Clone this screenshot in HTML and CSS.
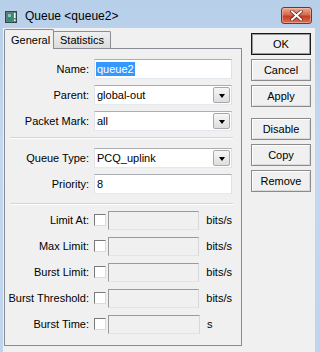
FILE: index.html
```html
<!DOCTYPE html>
<html lang="en">
<head>
  <meta charset="UTF-8" />
  <title>Queue &lt;queue2&gt;</title>
  <link rel="stylesheet" href="styles.css">
</head>
<body>

<div class="window">
  <div class="titlebar">
    <svg class="app-icon" width="12" height="12" viewBox="0 0 12 12">
      <rect x="0.5" y="0.5" width="11" height="11" fill="#6b7a80" stroke="#3a4448"/>
      <rect x="2" y="2" width="6" height="8" fill="#2f8f72"/>
      <rect x="3" y="3" width="3" height="3" fill="#7fd0b0"/>
      <rect x="9" y="2" width="1.5" height="5" fill="#ffffff"/>
      <rect x="9" y="8.5" width="1.5" height="1.5" fill="#ffffff"/>
    </svg>
    <span class="title">Queue &lt;queue2&gt;</span>
    <div class="close">
      <svg width="13" height="11" viewBox="0 0 13 11">
        <path d="M2 1.5 L11 9.5 M11 1.5 L2 9.5" stroke="#5a2018" stroke-width="3.4" stroke-linecap="square"/>
        <path d="M2 1.5 L11 9.5 M11 1.5 L2 9.5" stroke="#ffffff" stroke-width="2" stroke-linecap="square"/>
      </svg>
    </div>
  </div>

  <div class="client">
    <div class="tabs-area">
      <div class="tabs">
        <div class="tab active">General</div>
        <div class="tab">Statistics</div>
      </div>
      <div class="panel">
        <div class="form">
          <label>Name:</label>
          <div class="field"><span class="selected">queue2</span></div>

          <label>Parent:</label>
          <div class="field select"><span class="value">global-out</span><span class="drop"></span></div>

          <label>Packet Mark:</label>
          <div class="field select"><span class="value">all</span><span class="drop"></span></div>

          <div class="sep sep-first"></div>

          <label>Queue Type:</label>
          <div class="field select"><span class="value">PCQ_uplink</span><span class="drop"></span></div>

          <label>Priority:</label>
          <div class="field"><span class="value">8</span></div>

          <div class="sep sep-second"></div>

          <label>Limit At:</label>
          <div class="opt"><span class="check"></span><span class="off"></span><span class="unit">bits/s</span></div>

          <label>Max Limit:</label>
          <div class="opt"><span class="check"></span><span class="off"></span><span class="unit">bits/s</span></div>

          <label>Burst Limit:</label>
          <div class="opt"><span class="check"></span><span class="off"></span><span class="unit">bits/s</span></div>

          <label>Burst Threshold:</label>
          <div class="opt"><span class="check"></span><span class="off"></span><span class="unit">bits/s</span></div>

          <label>Burst Time:</label>
          <div class="opt"><span class="check"></span><span class="off"></span><span class="unit">s</span></div>
        </div>
      </div>
    </div>

    <div class="actions">
      <button class="btn default">OK</button>
      <button class="btn">Cancel</button>
      <button class="btn">Apply</button>
      <button class="btn group">Disable</button>
      <button class="btn">Copy</button>
      <button class="btn">Remove</button>
    </div>
  </div>
</div>

</body>
</html>
```

FILE: styles.css
```css
* {
  box-sizing: border-box;
}

body {
  margin: 0;
  font-family: "Liberation Sans", Arial, sans-serif;
  font-size: 11px;
  color: #000;
  background: #bfd5ee;
}

.window {
  width: 320px;
  height: 352px;
  overflow: hidden;
  background: linear-gradient(180deg, #b7cfe9 0%, #c3d8f0 40%, #bfd5ee 100%);
}

.titlebar {
  height: 28px;
  display: flex;
  align-items: flex-start;
  padding: 0 8px 0 5px;
}

.app-icon {
  margin-top: 11px;
}

.title {
  margin-left: 8px;
  margin-top: 9px;
  font-size: 12px;
  line-height: 14px;
}

.close {
  margin-left: auto;
  margin-top: 7px;
  width: 31px;
  height: 17px;
  border: 1px solid #7e3226;
  border-radius: 3px;
  background: linear-gradient(180deg, #e9a995 0%, #d8694f 45%, #c53d22 55%, #d7735b 100%);
  box-shadow: inset 0 0 0 1px rgba(255, 200, 180, 0.5);
  display: flex;
  align-items: center;
  justify-content: center;
}

.client {
  margin: 0 5px 0 3px;
  height: 324px;
  background: #f0f0f0;
  display: flex;
  padding: 1px 0 0 1px;
}

.tabs-area {
  width: 238px;
  display: flex;
  flex-direction: column;
}

.tabs {
  display: flex;
  align-items: flex-end;
  height: 20px;
  margin-bottom: -1px;
  position: relative;
  z-index: 1;
}

.tab {
  height: 17px;
  padding: 0 6px;
  border: 1px solid #898c95;
  border-bottom: none;
  border-radius: 2px 2px 0 0;
  background: linear-gradient(180deg, #efefef, #dcdcdc);
  line-height: 17px;
  margin-bottom: 1px;
  margin-left: -1px;
}

.tab.active {
  height: 20px;
  width: 50px;
  padding: 0 0 0 6px;
  margin: 0;
  background: #f0f0f0;
  line-height: 20px;
  margin-bottom: 0;
}

.panel {
  height: 298px;
  border: 1px solid #898c95;
  background: #f0f0f0;
  padding-top: 10px;
}

.form {
  display: grid;
  grid-template-columns: 84px 138px;
  column-gap: 5px;
  row-gap: 6px;
}

.form label {
  text-align: right;
  line-height: 20px;
  height: 20px;
  white-space: nowrap;
}

.field {
  height: 20px;
  background: #fff;
  border: 1px solid;
  border-color: #abadb3 #dbdfe6 #e3e9ef #e2e3ea;
  display: flex;
  align-items: center;
  padding-left: 1px;
  line-height: 16px;
}

.field .value {
  flex: 1;
  padding-left: 1px;
}

.selected {
  background: #3399ff;
  color: #fff;
  padding: 0 1px;
  line-height: 14px;
}

.drop {
  width: 17px;
  height: 16px;
  margin-right: 1px;
  border: 1px solid #a8a8a8;
  border-radius: 2px;
  background: linear-gradient(180deg, #f6f6f6, #dedede);
  display: flex;
  align-items: center;
  justify-content: center;
}

.drop::after {
  content: "";
  border-left: 3.5px solid transparent;
  border-right: 3.5px solid transparent;
  border-top: 4px solid #000;
  margin-top: 1px;
}

.sep {
  grid-column: 1 / -1;
  height: 2px;
  margin: 0 -1px 0 5px;
  border-top: 1px solid #d5d5d5;
  border-bottom: 1px solid #fff;
}

.sep-first {
  margin-bottom: 3px;
}

.sep-second {
  margin-top: 3px;
  margin-bottom: -1px;
}

.opt {
  height: 20px;
  display: flex;
  align-items: center;
}

.check {
  width: 12px;
  height: 12px;
  background: #fff;
  border: 1px solid;
  border-color: #7a7a7a #dcdcdc #dcdcdc #7a7a7a;
}

.off {
  width: 92px;
  height: 19px;
  margin-left: 2px;
  background: #f0f0f0;
  border: 1px solid;
  border-color: #9a9a9a #d8d8d8 #e4e4e4 #9a9a9a;
}

.unit {
  margin-left: 7px;
}

.actions {
  width: 60px;
  margin-left: 9px;
  padding-top: 4px;
  display: flex;
  flex-direction: column;
  gap: 4px;
}

.btn {
  height: 22px;
  font-family: "Liberation Sans", Arial, sans-serif;
  font-size: 11px;
  color: #000;
  background: #f0f0f0;
  border: 1px solid #8b8b8b;
  box-shadow: inset 1px 1px #ffffff, inset -1px -1px #dadada;
  padding: 0;
}

.btn.default {
  border-color: #1a1a1a;
  box-shadow: inset 0 0 0 1px #9a9a9a;
}

.btn.group {
  margin-top: 7px;
}
```
